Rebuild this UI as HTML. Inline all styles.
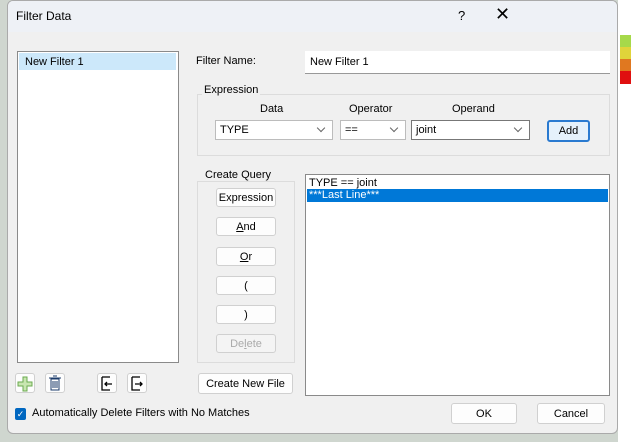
<html><head><style>
body{margin:0;width:631px;height:442px;overflow:hidden;background:#cfd6cf;font-family:"Liberation Sans",sans-serif;font-size:11px;color:#000;position:relative}
.a{position:absolute;box-sizing:border-box}
.dlg{left:7px;top:0;width:611px;height:434px;background:#f0f0f0;border:1px solid #aaa;border-radius:6px;overflow:hidden}
.btn{position:absolute;box-sizing:border-box;background:#fdfdfd;border:1px solid #d0d0d0;border-radius:3px;text-align:center;font-size:11px}
.cb{position:absolute;box-sizing:border-box;background:#fff;border:1px solid #bcbcbc;padding:3px 4px;font-size:11px}
.cb:after{content:"";position:absolute;right:8px;top:4px;width:5px;height:5px;border-right:1px solid #666;border-bottom:1px solid #666;transform:rotate(45deg)}
.grp{position:absolute;box-sizing:border-box;border:1px solid #dcdcdc}
.lg{position:absolute;background:#f0f0f0;padding:0 2px}
</style></head><body>
<div class="a" style="left:618px;top:0;width:13px;height:442px;background:#fff"></div>
<div class="a" style="left:620px;top:35px;width:11px;height:12px;background:#a6d94a"></div>
<div class="a" style="left:620px;top:47px;width:11px;height:12px;background:#e0d43a"></div>
<div class="a" style="left:620px;top:59px;width:11px;height:12px;background:#e07820"></div>
<div class="a" style="left:620px;top:71px;width:11px;height:13px;background:#e01010"></div>
<div class="a dlg">
<div class="a" style="left:0;top:0;width:611px;height:31px;background:#eef1f6"></div>
<div class="a" style="left:8px;top:8px;font-size:12px">Filter Data</div>
<div class="a" style="left:450px;top:7px;font-size:13px">?</div>
<div class="a" style="left:487px;top:3px;font-size:18px;font-weight:300">✕</div>
</div>
<div class="a" style="left:17px;top:51px;width:162px;height:312px;background:#fff;border:1px solid #8a8a8a"></div>
<div class="a" style="left:19px;top:53px;width:157px;height:17px;background:#cce8fa;padding:3px 6px">New Filter 1</div>
<div class="a" style="left:196px;top:55px">Filter Name:</div>
<div class="a" style="left:305px;top:51px;width:305px;height:23px;background:#fff;border-bottom:1px solid #999;padding:5px 5px">New Filter 1</div>
<div class="grp" style="left:197px;top:94px;width:413px;height:62px"></div>
<div class="lg" style="left:202px;top:84px">Expression</div>
<div class="a" style="left:260px;top:103px">Data</div>
<div class="a" style="left:349px;top:103px">Operator</div>
<div class="a" style="left:452px;top:103px">Operand</div>
<div class="cb" style="left:215px;top:120px;width:118px;height:20px">TYPE</div>
<div class="cb" style="left:340px;top:120px;width:66px;height:20px">==</div>
<div class="cb" style="left:411px;top:120px;width:119px;height:20px;border-color:#777">joint</div>
<div class="btn" style="left:547px;top:120px;width:43px;height:22px;border:2px solid #2a7ad0;background:#e5f1fb;padding-top:3px">Add</div>
<div class="grp" style="left:197px;top:181px;width:98px;height:182px"></div>
<div class="lg" style="left:203px;top:169px">Create Query</div>
<div class="btn" style="left:216px;top:188px;width:60px;height:19px;padding-top:3px">Expression</div>
<div class="btn" style="left:216px;top:217px;width:60px;height:19px;padding-top:3px"><u>A</u>nd</div>
<div class="btn" style="left:216px;top:247px;width:60px;height:19px;padding-top:3px"><u>O</u>r</div>
<div class="btn" style="left:216px;top:276px;width:60px;height:19px;padding-top:3px">(</div>
<div class="btn" style="left:216px;top:305px;width:60px;height:19px;padding-top:3px">)</div>
<div class="btn" style="left:216px;top:334px;width:60px;height:19px;padding-top:3px;color:#aaa;background:#f4f4f4">De<u>l</u>ete</div>
<div class="a" style="left:305px;top:174px;width:305px;height:222px;background:#fff;border:1px solid #8a8a8a"></div>
<div class="a" style="left:309px;top:177px">TYPE == joint</div>
<div class="a" style="left:307px;top:189px;width:301px;height:13px;background:#0078d7;color:#fff;padding:0 2px">***Last Line***</div>
<div class="btn" style="left:198px;top:373px;width:95px;height:21px;padding-top:4px">Create New File</div>
<div class="btn" style="left:15px;top:373px;width:20px;height:20px"><svg width="18" height="18"><path d="M7 3h4v5h5v4h-5v5H7v-5H2V8h5z" fill="#c8e6b0" stroke="#6aaa50"/></svg></div>
<div class="btn" style="left:45px;top:373px;width:20px;height:20px"><svg width="18" height="18"><path d="M5 5h8v11H5zM3 4h12M7 2h4M7 7v7M9 7v7M11 7v7" fill="none" stroke="#1a3a6a" stroke-width="1"/></svg></div>
<div class="btn" style="left:97px;top:373px;width:20px;height:20px"><svg width="18" height="18"><path d="M4 3v13h8M4 3h8M14 10H7M9 8l-2 2 2 2" fill="none" stroke="#000" stroke-width="1.3"/></svg></div>
<div class="btn" style="left:127px;top:373px;width:20px;height:20px"><svg width="18" height="18"><path d="M4 3v13h8M4 3h8M7 10h7M12 8l2 2-2 2" fill="none" stroke="#000" stroke-width="1.3"/></svg></div>
<div class="a" style="left:15px;top:408px;width:11px;height:12px;background:#0067c0;border-radius:2px;color:#fff;font-size:9px;text-align:center;line-height:12px">✓</div>
<div class="a" style="left:32px;top:407px;font-size:11px">Automatically Delete Filters with No Matches</div>
<div class="btn" style="left:451px;top:403px;width:66px;height:21px;padding-top:4px">OK</div>
<div class="btn" style="left:537px;top:403px;width:68px;height:21px;padding-top:4px">Cancel</div>
</body></html>
